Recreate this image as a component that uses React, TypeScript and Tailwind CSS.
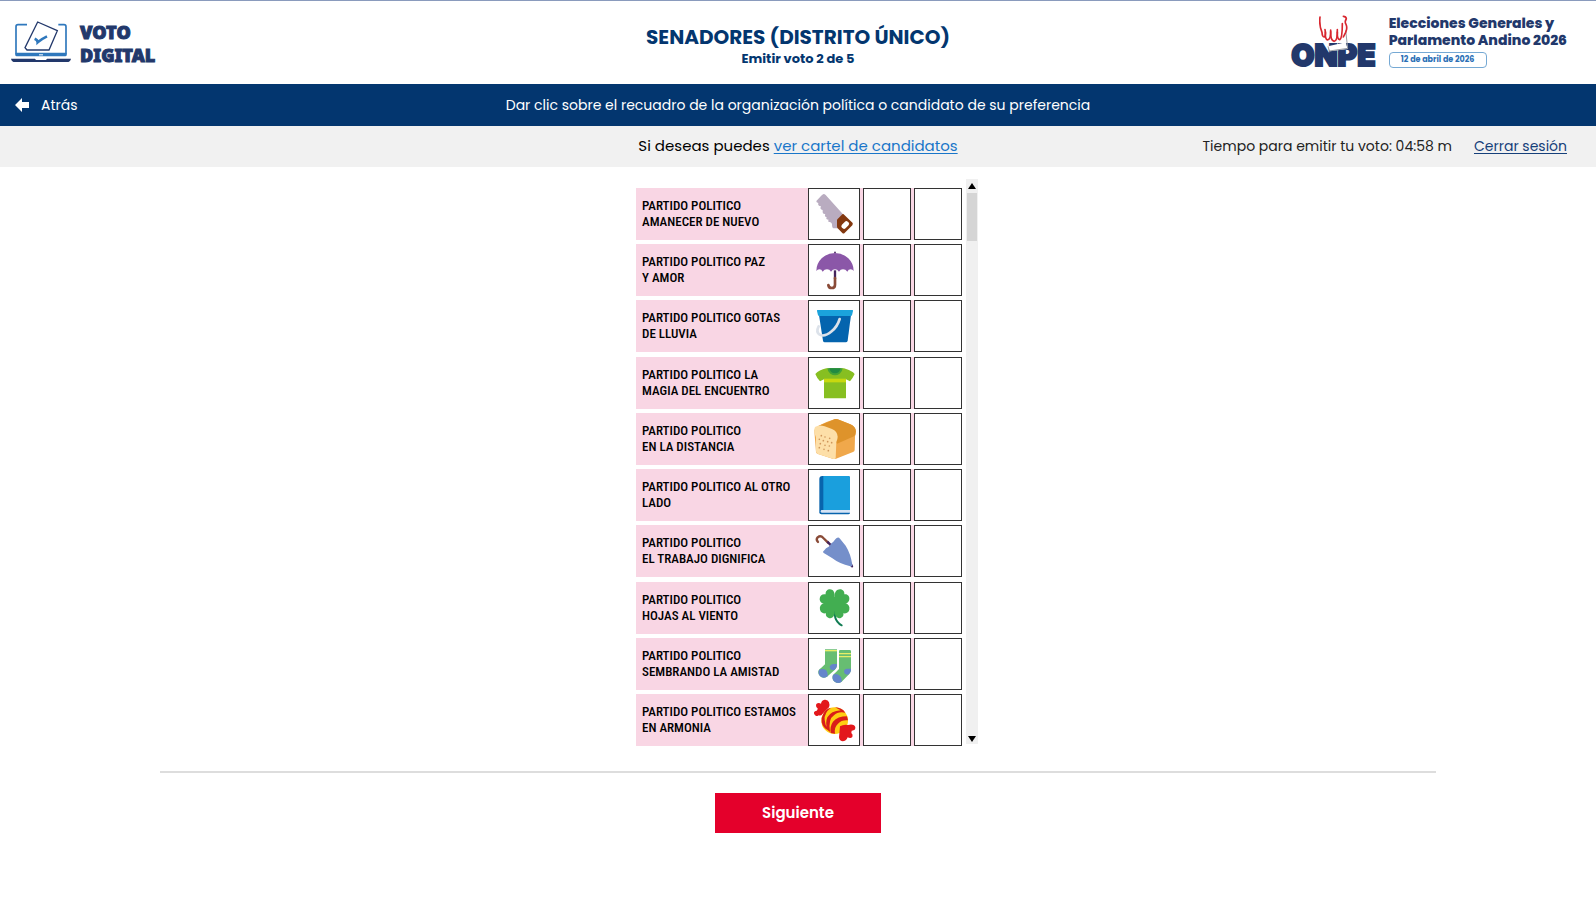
import { useState } from "react";
import type { ReactNode } from "react";

const saw = (
  <>
    <path d="M46 17Q42 18 38 23L24 38Q23 42 30 44Q27 53 38 54Q33 64 43 65L43 72Q43 78 51 77Q47 85 55 87Q51 94 61 94Q57 101 65 101Q71 103 71 108Q71 120 76 120L90 120L106 80L52 20Q49 17 46 17Z" fill="#b9acc0" />
    <path d="M106 78L133 104Q134 107 132 111L108 135Q105 137 102 134L88 120Q86 118 86 113L86 95Q87 92 91 89L102 78Q104 76 106 78Z" fill="#83380f" />
    <rect x="98" y="103" width="25" height="15" rx="6" transform="rotate(-46 110 110)" fill="#fff" />
  </>
);

const umbrella = (
  <>
    <path d="M80 26V24" stroke="#44235c" strokeWidth="5" strokeLinecap="round" />
    <path d="M80 78V104" stroke="#44235c" strokeWidth="7" />
    <path d="M80 101V121Q80 131 70 131Q61 131 60 122" fill="none" stroke="#8a4b38" strokeWidth="8" strokeLinecap="round" />
    <path d="M24 80Q24 58 40 42Q57 26 80 26Q103 26 120 42Q136 58 136 80Q133 75 127 75Q120 75 117 82Q112 75 104 75Q96 75 92 82Q87 75 80 75Q73 75 68 82Q64 75 56 75Q48 75 43 82Q40 75 33 75Q27 75 24 80Z" fill="#8b57a8" />
  </>
);

const bucket = (
  <>
    <path d="M32 44H128L118 121Q117 126 112 126H49Q45 126 44 121Z" fill="#0464ae" />
    <path d="M28 29H132Q135 29 134 32L131 45Q130 47 127 47H33Q30 47 29 45L26 32Q25 29 28 29Z" fill="#1ba3dc" />
    <path d="M94 56Q87 79 70 93Q49 111 34 103Q22 95 31 78" fill="none" stroke="#dce2ea" strokeWidth="8" strokeLinecap="round" />
  </>
);

const shirt = (
  <>
    <path d="M54 33H107Q123 37 134 45L139 50Q132 65 125 72L113 66V121Q113 123 111 123H49Q47 123 47 121V66L35 72Q26 63 21 50Q32 38 54 33Z" fill="#87bf21" />
    <path d="M47 64H113V75H47Z" fill="#c8d80f" />
    <path d="M57 33H103Q102 43 94 49Q80 58 66 49Q58 43 57 33Z" fill="#44a336" />
    <path d="M63 33H97Q94 48 80 48Q66 48 63 33Z" fill="#218a42" />
  </>
);

const bread = (
  <>
    <path d="M80 17Q58 24 37 34Q19 43 18 52L23 116Q24 120 29 122L75 137Q79 138 83 136L134 116Q139 114 139 110L140 70Q144 60 141 48Q139 39 126 33L88 18Q84 16 80 17Z" fill="#f0a84b" />
    <path d="M30 38L74 20Q80 16 88 18L126 33Q142 40 143 54Q142 66 137 69L86 91L70 66Z" fill="#de932b" />
    <path d="M20 41Q31 33 49 39L71 47Q87 54 88 70Q88 78 84 86L82 135Q81 138 75 137L29 122Q23 119 23 114V72Q14 53 20 41Z" fill="#fddfa8" />
    <g fill="#cf965b">
      <circle cx="39" cy="67" r="2.5" /><circle cx="50" cy="71" r="2.5" /><circle cx="64" cy="75" r="2.5" />
      <circle cx="33" cy="78" r="2.5" /><circle cx="45" cy="82" r="2.5" /><circle cx="58" cy="85" r="2.5" />
      <circle cx="70" cy="88" r="2.5" /><circle cx="36" cy="91" r="2.5" /><circle cx="50" cy="96" r="2.5" />
      <circle cx="63" cy="98" r="2.5" /><circle cx="33" cy="103" r="2.5" /><circle cx="47" cy="108" r="2.5" />
      <circle cx="60" cy="112" r="2.5" />
    </g>
  </>
);

const book = (
  <>
    <path d="M42 20H120Q125 20 125 25V130Q125 135 120 135H39Q33 135 33 129V29Q33 20 42 20Z" fill="#0864ad" />
    <path d="M45 20H120Q125 20 125 25V122H45Z" fill="#1a9fdd" />
    <path d="M40 122H125V130H40Q37 130 37 126Q37 122 40 122Z" fill="#d5e4f6" />
  </>
);

const closedUmbrella = (
  <>
    <path d="M29 50Q22 43 28 36Q37 29 45 38L59 52" fill="none" stroke="#8a4b38" strokeWidth="7" strokeLinecap="round" />
    <path d="M57 49L68 60" stroke="#44235c" strokeWidth="7" />
    <path d="M129 119L131 123" stroke="#44235c" strokeWidth="7" strokeLinecap="round" />
    <path d="M87 37Q91 35 95 40L112 61Q127 85 132 118Q133 124 126 123Q93 115 71 98L45 82Q42 79 48 75Q52 67 61 64Q67 60 69 54Q75 51 81 42Q84 38 87 37Z" fill="#758fca" />
  </>
);

const clover = (
  <>
    <path d="M80 88Q78 107 87 118Q93 126 100 129" fill="none" stroke="#107c53" strokeWidth="6" strokeLinecap="round" />
    <g fill="#42ae51">
      <path d="M79 65C72 66 64 66 54 65C41 66 34 58 34 50C34 40 42 34 52 36C51 27 57 21 65 21C74 21 79 30 79 38Z" />
      <path d="M79 65V38C79 30 85 21 95 21C104 21 109 28 108 36C118 34 124 42 123 50C122 61 113 66 104 65Z" />
      <path d="M79 64C64 63 52 63 46 63C37 66 33 74 35 82C37 91 45 94 53 93C51 101 57 108 66 108C75 107 79 98 79 90Z" />
      <path d="M79 64C94 63 106 63 112 63C121 66 125 74 123 82C121 91 113 94 105 93C107 101 101 108 93 108C84 107 79 98 79 90Z" />
      <path d="M60 44H98V86H60Z" />
    </g>
  </>
);

const socks = (
  <>
    <path d="M50 33H86V82Q85 89 79 95L56 115Q47 121 38 116Q28 108 30 98Q32 92 39 88L50 78Z" fill="#67bd72" />
    <path d="M64 85Q66 77 74 77H86V82Q85 89 78 95Q65 97 64 85Z" fill="#6485cb" />
    <path d="M32 95Q40 90 48 93Q59 98 58 114Q49 121 39 116Q27 109 32 95Z" fill="#6485cb" />
    <path d="M50 35H86V39H50Z" fill="#e8ee66" />
    <path d="M92 38Q92 35 96 35H124Q128 35 128 39V96Q127 102 122 108L100 130Q89 137 79 130Q70 123 73 112Q75 107 81 103L92 92Z" fill="#67bd72" />
    <path d="M107 99Q108 91 116 91H128V96Q128 101 122 108Q108 112 107 99Z" fill="#6485cb" />
    <path d="M74 110Q82 105 90 109Q102 115 100 130Q90 137 80 131Q69 124 74 110Z" fill="#6485cb" />
    <path d="M92 44H128V48H92ZM92 53H128V57H92Z" fill="#e8ee66" />
  </>
);

const candy = (
  <>
    <path d="M56 45L43 58Q38 66 31 63Q28 67 22 64Q15 60 17 54Q19 49 25 49Q28 47 28 42Q21 37 24 29Q30 23 38 28Q39 18 49 16Q59 15 62 24Q65 32 62 39Z" fill="#e3181c" />
    <circle cx="79" cy="79" r="40" fill="#ffce12" />
    <path d="M45 58Q52 43 68 40Q47 56 49 76Q50 94 60 108Q44 101 40 84Q38 69 45 58ZM80 39Q101 40 111 55Q88 51 77 63Q59 74 65 113L57 106Q50 86 57 69Q68 50 97 48ZM116 66L119 78Q100 76 89 88Q77 98 80 118L67 116Q64 96 74 82Q88 66 116 66Z" fill="#d91d19" />
    <path d="M95 96Q106 89 119 92Q130 88 137 93Q144 99 139 106Q133 109 130 109L129 116Q135 121 132 128Q127 134 118 129Q114 141 102 141Q93 139 92 129Z" fill="#e3181c" />
  </>
);

type Party = { id: string; lines: [string, string]; symbol: ReactNode };

const parties: Party[] = [
  { id: "serrucho", lines: ["PARTIDO POLITICO", "AMANECER DE NUEVO"], symbol: saw },
  { id: "paraguas", lines: ["PARTIDO POLITICO PAZ", "Y AMOR"], symbol: umbrella },
  { id: "balde", lines: ["PARTIDO POLITICO GOTAS", "DE LLUVIA"], symbol: bucket },
  { id: "polo", lines: ["PARTIDO POLITICO LA", "MAGIA DEL ENCUENTRO"], symbol: shirt },
  { id: "pan", lines: ["PARTIDO POLITICO", "EN LA DISTANCIA"], symbol: bread },
  { id: "libro", lines: ["PARTIDO POLITICO AL OTRO", "LADO"], symbol: book },
  { id: "sombrilla", lines: ["PARTIDO POLITICO", "EL TRABAJO DIGNIFICA"], symbol: closedUmbrella },
  { id: "trebol", lines: ["PARTIDO POLITICO", "HOJAS AL VIENTO"], symbol: clover },
  { id: "medias", lines: ["PARTIDO POLITICO", "SEMBRANDO LA AMISTAD"], symbol: socks },
  { id: "caramelo", lines: ["PARTIDO POLITICO ESTAMOS", "EN ARMONIA"], symbol: candy },
];

function LaptopLogo() {
  return (
    <svg viewBox="0 0 180 123" className="h-[41px] w-[60px]" aria-hidden="true">
      <g fill="none">
        <path d="M48 11H21Q15 11 15 17V98H165V17Q165 11 159 11H142" stroke="#2f78bd" strokeWidth="5" />
        <path d="M13 97H167V103Q167 106 163 106H17Q13 106 13 103Z" fill="#2f78bd" />
        <path d="M80 3L139 29L114 87H48L42 80Z" fill="#fff" stroke="#22386b" strokeWidth="4" />
        <path d="M71 53Q80 57 80 64Q93 53 108 46" stroke="#2f78bd" strokeWidth="8" />
      </g>
      <path d="M84 100H96V103H84Z" fill="#fff" />
      <path d="M0 113H72L75 117H105L108 113H180Q178 123 168 123H12Q2 123 0 113Z" fill="#22386b" />
    </svg>
  );
}

function OnpeLogo() {
  return (
    <div className="relative flex h-[54px] items-end">
      <span className="font-[Inter,sans-serif] text-[30px] leading-[28px] font-black text-[#22386b] [-webkit-text-stroke:2px_#22386b]">
        ONPE
      </span>
      <svg viewBox="88 46 90 111" className="absolute top-0 left-[28px] h-[37px] w-[30px]" aria-hidden="true">
        <path d="M115 140L120 155L174 148L168 128Z" fill="#fff" />
        <path d="M168 92L174 146L119 154L115 140" fill="none" stroke="#9b9fa5" strokeWidth="3" />
        <g fill="none" stroke="#d8262f" strokeWidth="5" strokeLinecap="round" strokeLinejoin="round">
          <path d="M91 52Q88 78 97 98Q98 113 104 112Q110 108 106 90" />
          <path d="M107 97Q106 118 113 121Q124 120 123 91" />
          <path d="M123 96Q122 121 133 125Q144 124 143 90" />
          <path d="M143 97Q142 119 150 120Q158 116 158 72" />
          <path d="M161 50Q169 50 170 57Q164 66 169 74Q174 84 168 98L161 112" />
        </g>
      </svg>
    </div>
  );
}

export default function App() {
  const [selected, setSelected] = useState("");

  return (
    <div className="min-h-screen bg-white font-[Poppins,Inter,sans-serif] text-black">
      <header className="grid h-[84px] grid-cols-[1fr_auto_1fr] items-center border-t border-[#8a9bbd]">
        <div className="flex items-center gap-[9px] pb-0.5 pl-[11px]">
          <LaptopLogo />
          <p className="pt-1 font-['Noto_Sans',sans-serif] text-[18px] leading-[23px] font-black text-[#22386b] [-webkit-text-stroke:1px_#22386b]">
            VOTO
            <br />
            DIGITAL
          </p>
        </div>
        <div className="pt-2 text-center font-bold text-[#03366f]">
          <h1 className="text-[20px] leading-6">SENADORES (DISTRITO ÚNICO)</h1>
          <p className="text-[13px] leading-5">Emitir voto 2 de 5</p>
        </div>
        <div className="flex items-center justify-end gap-[13px] pr-[29px] pb-0.5">
          <OnpeLogo />
          <div className="font-extrabold text-[#22386b]">
            <p className="text-[14px] leading-[17px]">
              Elecciones Generales y
              <br />
              Parlamento Andino 2026
            </p>
            <p className="mt-[3px] w-[98px] rounded-[4px] border border-[#76a9d4] text-center text-[8px] leading-[14px] font-bold text-[#2c70b6]">
              12 de abril de 2026
            </p>
          </div>
        </div>
      </header>

      <nav className="grid h-[42px] grid-cols-[1fr_auto_1fr] items-center bg-[#03366f] px-[15px] text-[14px] text-white">
        <button type="button" className="flex items-center gap-3 justify-self-start">
          <svg viewBox="0 0 14 14" className="size-[14px]" fill="currentColor" aria-hidden="true">
            <path d="M0 7L7 0V4H14V10H7V14Z" />
          </svg>
          Atrás
        </button>
        <p>Dar clic sobre el recuadro de la organización política o candidato de su preferencia</p>
        <span />
      </nav>

      <div className="grid h-[41px] grid-cols-[1fr_auto_1fr] items-center bg-[#f1f1f1] px-[29px]">
        <span />
        <p className="text-[15px]">
          Si deseas puedes{" "}
          <a href="#cartel" className="text-[#1976c9] underline underline-offset-2">
            ver cartel de candidatos
          </a>
        </p>
        <div className="flex justify-end gap-[22px] text-[14px] text-[#222]">
          <p>Tiempo para emitir tu voto: 04:58 m</p>
          <a href="#salir" className="text-[#16407a] underline underline-offset-2">
            Cerrar sesión
          </a>
        </div>
      </div>

      <main className="flex flex-col items-center pt-3">
        <div className="flex gap-1 pl-[18px]">
          <ul className="flex h-[567px] w-[326px] flex-col justify-between pt-[9px]">
            {parties.map((party) => (
              <li key={party.id} className="flex h-[52px] gap-[3px] bg-[#f9d6e4]">
                <button
                  type="button"
                  aria-pressed={selected === party.id}
                  onClick={() => setSelected(party.id)}
                  className="flex flex-1 items-center text-left"
                >
                  <span className="flex-1 pl-1.5 font-['Roboto_Condensed','Liberation_Sans_Narrow',sans-serif] text-[13px] leading-4 font-medium whitespace-nowrap">
                    {party.lines[0]}
                    <br />
                    {party.lines[1]}
                  </span>
                  <span className="size-[52px] border border-[#333] bg-white">
                    <svg viewBox="2 2 150 150" className="size-[50px]" aria-hidden="true">
                      {party.symbol}
                    </svg>
                  </span>
                </button>
                <input
                  type="text"
                  maxLength={2}
                  aria-label={`Primer voto preferencial, ${party.lines.join(" ")}`}
                  className="w-12 border border-[#333] bg-white text-center"
                />
                <input
                  type="text"
                  maxLength={2}
                  aria-label={`Segundo voto preferencial, ${party.lines.join(" ")}`}
                  className="w-12 border border-[#333] bg-white text-center"
                />
              </li>
            ))}
          </ul>
          <div className="flex h-[565px] w-3 flex-col items-center bg-[#f0f0f0]" aria-hidden="true">
            <svg viewBox="0 0 8 6" className="my-1 h-[6px] w-2 shrink-0">
              <path d="M4 0L8 6H0Z" />
            </svg>
            <div className="h-12 w-[10px] bg-[#d5d5d5]" />
            <svg viewBox="0 0 8 6" className="mt-auto mb-[2px] h-[6px] w-2">
              <path d="M0 0H8L4 6Z" />
            </svg>
          </div>
        </div>
        <hr className="mt-[25px] w-4/5 border-t-2 border-[#dddddd]" />
        <button type="button" className="mt-5 h-10 w-[166px] bg-[#e4002b] text-[15px] font-semibold text-white">
          Siguiente
        </button>
      </main>
    </div>
  );
}
